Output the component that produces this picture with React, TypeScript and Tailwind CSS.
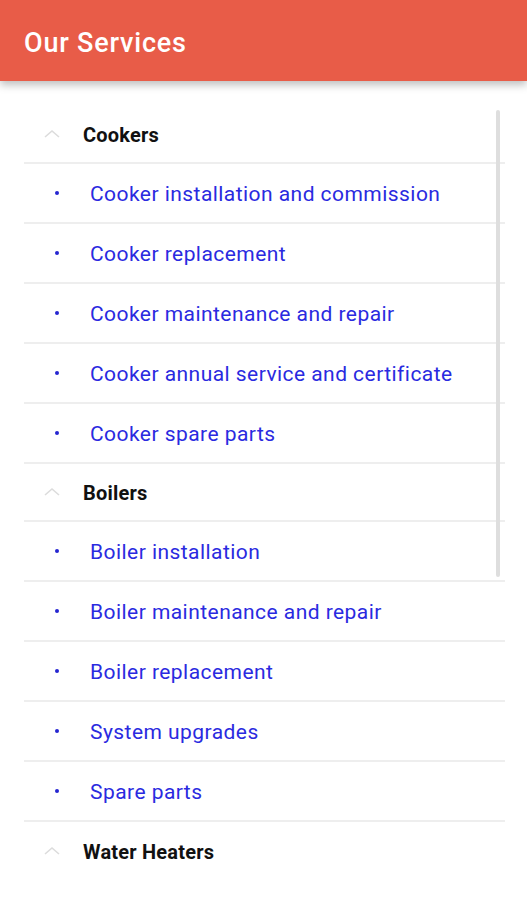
import React from "react";

const sections = [
  {
    title: "Cookers",
    items: [
      "Cooker installation and commission",
      "Cooker replacement",
      "Cooker maintenance and repair",
      "Cooker annual service and certificate",
      "Cooker spare parts",
    ],
  },
  {
    title: "Boilers",
    items: [
      "Boiler installation",
      "Boiler maintenance and repair",
      "Boiler replacement",
      "System upgrades",
      "Spare parts",
    ],
  },
  { title: "Water Heaters", items: [] as string[] },
];

function Chevron() {
  return (
    <svg width="20" height="12" viewBox="0 0 20 12" className="shrink-0">
      <path d="M3 9 L10 3 L17 9" fill="none" stroke="#dcdcdc" strokeWidth="1.6" />
    </svg>
  );
}

export default function App() {
  return (
    <div className="w-[527px] h-[900px] bg-white overflow-hidden relative" style={{ fontFamily: "Roboto, 'Liberation Sans', sans-serif" }}>
      <div className="h-[81px] bg-[#e85c48] flex items-center pl-6 shadow-[0_4px_8px_rgba(0,0,0,0.25)] relative z-10">
        <h1 className="text-white text-[27px] font-medium tracking-[0.8px] mt-[5px]">Our Services</h1>
      </div>
      <div className="relative pt-[25px] pl-6 pr-[22px]">
        <div className="absolute left-[496px] top-[29px] w-[4px] h-[467px] bg-[#dedede] rounded-sm" />
        {sections.map((s) => (
          <div key={s.title}>
            <div className={`h-[58px] flex items-center ${s.items.length ? "border-b-2 border-[#eeeeee]" : ""}`}>
              <div className="w-[59px] pl-[18px] flex items-center">
                <Chevron />
              </div>
              <span className="text-[20px] font-bold text-[#111] tracking-[0.2px] mt-[2px]">{s.title}</span>
            </div>
            {s.items.map((it) => (
              <div key={it} className="h-[60px] flex items-center border-b-2 border-[#eeeeee]">
                <div className="w-[66px] pl-[31px] flex items-center">
                  <span className="w-[4px] h-[4px] rounded-full bg-[#2525d0]" />
                </div>
                <span className="text-[21px] text-[#2a2ae0] tracking-[0.45px] mt-[3px]">{it}</span>
              </div>
            ))}
          </div>
        ))}
      </div>
    </div>
  );
}
